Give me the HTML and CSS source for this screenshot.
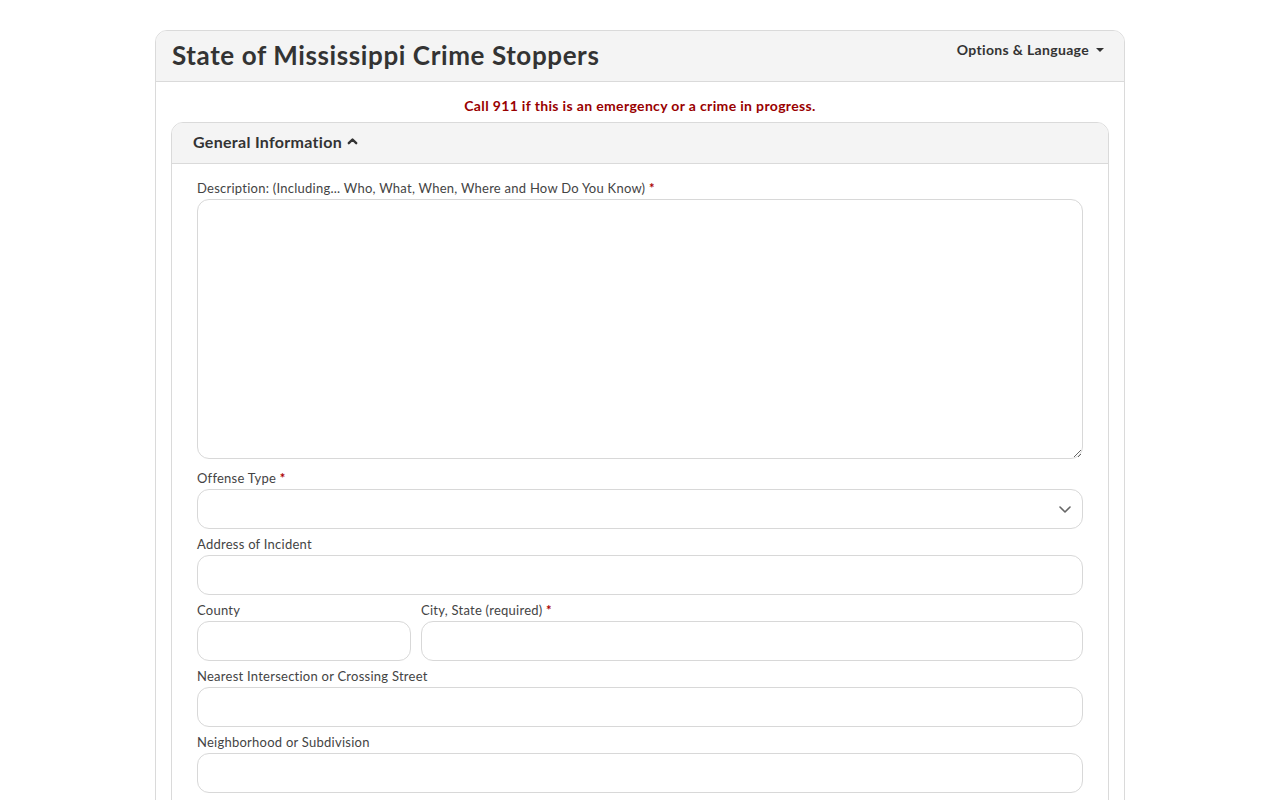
FILE: index.html
```html
<!DOCTYPE html>
<html lang="en">
<head>
<meta charset="utf-8">
<title>State of Mississippi Crime Stoppers</title>
<link rel="stylesheet" href="styles.css">
</head>
<body>
<div class="page">
  <div class="card">
    <div class="card-header">
      <h1 class="title">State of Mississippi Crime Stoppers</h1>
      <div class="options">Options &amp; Language <span class="caret"></span></div>
    </div>
    <div class="card-body">
      <div class="alert">Call 911 if this is an emergency or a crime in progress.</div>
      <div class="panel">
        <div class="panel-header">
          <span>General Information</span>
          <svg class="chev-up" width="11" height="8" viewBox="0 0 11 8"><path d="M1.8 6.2 L5.5 2.5 L9.2 6.2" fill="none" stroke="#333" stroke-width="2.4" stroke-linecap="round" stroke-linejoin="round"/></svg>
        </div>
        <div class="panel-body">
          <div class="group group-text">
            <label class="label">Description: (Including... Who, What, When, Where and How Do You Know) <span class="req">*</span></label>
            <textarea class="control textarea"></textarea>
          </div>
          <div class="group">
            <label class="label">Offense Type <span class="req">*</span></label>
            <div class="control select">
              <svg class="chev-down" width="14" height="9" viewBox="0 0 14 9"><path d="M2 2 L7 7 L12 2" fill="none" stroke="#666" stroke-width="1.6" stroke-linecap="round" stroke-linejoin="round"/></svg>
            </div>
          </div>
          <div class="group">
            <label class="label">Address of Incident</label>
            <div class="control"></div>
          </div>
          <div class="row">
            <div class="group col-3">
              <label class="label">County</label>
              <div class="control"></div>
            </div>
            <div class="group col-9">
              <label class="label">City, State (required) <span class="req">*</span></label>
              <div class="control"></div>
            </div>
          </div>
          <div class="group">
            <label class="label">Nearest Intersection or Crossing Street</label>
            <div class="control"></div>
          </div>
          <div class="group">
            <label class="label">Neighborhood or Subdivision</label>
            <div class="control"></div>
          </div>
        </div>
      </div>
    </div>
  </div>
</div>
</body>
</html>
```

FILE: styles.css
```css
* { box-sizing: border-box; }
html, body { margin: 0; padding: 0; background: #fff; }
body {
  font-family: "Lato", "Open Sans", sans-serif;
  color: #333;
  height: 800px;
  overflow: hidden;
}
.page {
  width: 970px;
  margin: 30px auto 0 155px;
}
.card {
  border: 1px solid #dadada;
  border-radius: 12px;
  background: #fff;
  min-height: 900px;
}
.card-header {
  background: #f4f4f4;
  border-bottom: 1px solid #dadada;
  border-radius: 11px 11px 0 0;
  height: 51px;
  display: flex;
  justify-content: space-between;
  align-items: flex-start;
  padding: 0 20px 0 16px;
}
.title {
  margin: 0;
  font-size: 26px;
  font-weight: 700;
  line-height: 48px;
  letter-spacing: 0.6px;
  color: #333;
}
.options {
  font-size: 14px;
  font-weight: 700;
  line-height: 20px;
  letter-spacing: 0.33px;
  margin-top: 9px;
  color: #333;
  display: flex;
  align-items: center;
}
.caret {
  display: inline-block;
  width: 0;
  height: 0;
  margin-left: 7px;
  border-left: 4px solid transparent;
  border-right: 4px solid transparent;
  border-top: 4px solid #333;
}
.card-body {
  padding: 14px 15px 0 15px;
}
.alert {
  text-align: center;
  color: #990000;
  font-weight: 700;
  font-size: 14px;
  line-height: 20px;
  letter-spacing: 0.35px;
  margin-bottom: 6px;
}
.panel {
  border: 1px solid #dadada;
  border-radius: 12px;
  min-height: 800px;
}
.panel-header {
  background: #f4f4f4;
  border-bottom: 1px solid #dadada;
  border-radius: 11px 11px 0 0;
  height: 41px;
  padding: 0 21px 3px 21px;
  display: flex;
  align-items: center;
  font-size: 16px;
  font-weight: 700;
  letter-spacing: 0.3px;
  color: #333;
}
.chev-up { margin-left: 5px; margin-top: -2px; }
.panel-body {
  padding: 15px 25px 0 25px;
}
.group {
  margin-bottom: 6px;
}
.group-text {
  margin-bottom: 10px;
}
.label {
  display: block;
  font-size: 13px;
  line-height: 18px;
  letter-spacing: 0.25px;
  color: #444;
  margin-bottom: 2px;
}
.req { color: #a00; font-weight: 700; }
.control {
  display: block;
  width: 100%;
  height: 40px;
  border: 1px solid #d8d8d8;
  border-radius: 12px;
  background: #fff;
  font: inherit;
  margin: 0;
}
.textarea {
  height: 260px;
  resize: vertical;
}
.select {
  position: relative;
}
.chev-down {
  position: absolute;
  right: 10px;
  top: 15px;
}
.row {
  display: flex;
  margin: 0 -5px;
}
.row .group { padding: 0 5px; }
.col-3 { flex: 0 0 25%; }
.col-9 { flex: 0 0 75%; }
```
